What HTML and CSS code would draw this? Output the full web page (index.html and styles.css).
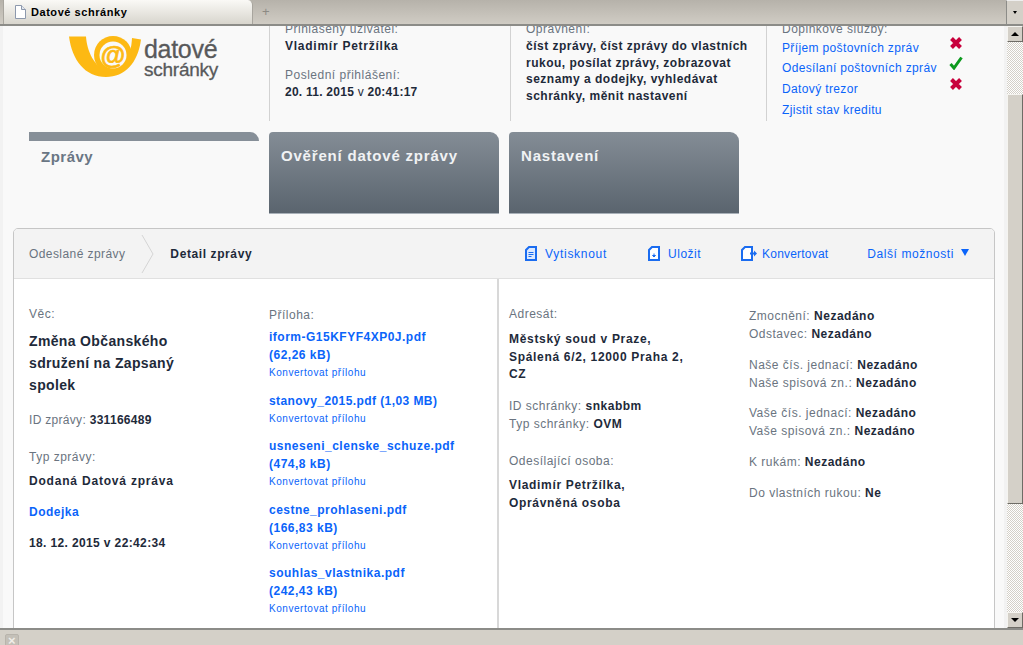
FILE: index.html
```html
<!DOCTYPE html>
<html lang="cs">
<head>
<meta charset="utf-8">
<title>Datové schránky</title>
<link rel="stylesheet" href="styles.css">
</head>
<body>
<div class="tabbar">
  <div class="tab">
    <svg class="tab-icon" width="12" height="14" viewBox="0 0 12 14"><path d="M1.500.5h6l4 4v9h-10z" fill="#fff" stroke="#8d99ad"/><path d="M7.500.5v4h4" fill="#e4e8ee" stroke="#8d99ad"/></svg>
    <span>Datové schránky</span>
  </div>
  <div class="newtab">+</div>
  <div class="tab-menu"><span class="menu-arrow"></span></div>
</div>
<div class="browser">
  <div class="viewport">
    <div class="page">
      <header class="head">
        <div class="logo">
          <svg class="logo-mark" width="74" height="42" viewBox="0 0 74 42">
            <path d="M0 .5H17C18 15 25 31 40 36.500C54 38 62 22 63 2L72 3.500C69 27 56 41 37 41C16 41 3 24 0 .5Z" fill="#fdb913"/>
            <circle cx="44" cy="19" r="19" fill="#fdb913"/>
            <circle cx="44" cy="19" r="13.500" fill="#f9f9f9"/>
            <text class="logo-at" x="44" y="27.500" text-anchor="middle">@</text>
          </svg>
          <div class="logo-text"><span class="logo-a">datové</span><span class="logo-b">schránky</span></div>
        </div>
        <div class="hcol user">
          <div class="label">Přihlášený uživatel:</div>
          <div class="val name">Vladimír Petržílka</div>
          <div class="label gap">Poslední přihlášení:</div>
          <div class="val when">20. 11. 2015 <span class="reg">v</span> 20:41:17</div>
        </div>
        <div class="hcol perm">
          <div class="label">Oprávnění:</div>
          <div class="val perms">číst zprávy, číst zprávy do vlastních rukou, posílat zprávy, zobrazovat seznamy a dodejky, vyhledávat schránky, měnit nastavení</div>
        </div>
        <div class="hcol extras">
          <div class="label">Doplňkové služby:</div>
          <div class="svc"><a>Příjem poštovních zpráv</a><svg class="st" width="14" height="14" viewBox="0 0 14 14"><path d="M2.500 2.500L11.500 11.500M11.500 2.500L2.500 11.500" stroke="#c8003c" stroke-width="4"/></svg></div>
          <div class="svc"><a>Odesílaní poštovních zpráv</a><svg class="st" width="14" height="14" viewBox="0 0 14 14"><path d="M1.500 8L5 12L12.500 1.500" fill="none" stroke="#0c9a1e" stroke-width="3"/></svg></div>
          <div class="svc"><a>Datový trezor</a><svg class="st" width="14" height="14" viewBox="0 0 14 14"><path d="M2.500 2.500L11.500 11.500M11.500 2.500L2.500 11.500" stroke="#c8003c" stroke-width="4"/></svg></div>
          <div class="credit"><a>Zjistit stav kreditu</a></div>
        </div>
      </header>
      <nav class="tabs">
        <div class="mtab active">Zprávy</div>
        <div class="mtab">Ověření datové zprávy</div>
        <div class="mtab">Nastavení</div>
      </nav>
      <section class="panel">
        <div class="toolbar">
          <span class="crumb">Odeslané zprávy</span>
          <svg class="chev" width="14" height="40" viewBox="0 0 14 40"><path d="M1 1L12 20L1 39" fill="none" stroke="#d4d4d4"/></svg>
          <b class="current">Detail zprávy</b>
          <div class="actions">
            <a class="act a1"><svg width="12" height="15" viewBox="0 0 12 15"><path d="M4 1h7v13h-10v-10z" fill="#dce9ff" stroke="#1a6cf0" stroke-width="2"/><path d="M3.500 6.500h5M3.500 8.500h5M3.500 10.500h3" stroke="#1a6cf0"/></svg>Vytisknout</a>
            <a class="act a2"><svg width="12" height="15" viewBox="0 0 12 15"><path d="M4 1h7v13h-10v-10z" fill="#fff" stroke="#1a6cf0" stroke-width="2"/><path d="M6 7.500v2M4.500 9.500h3L6 11z" stroke="#1a6cf0" fill="#1a6cf0"/></svg>Uložit</a>
            <a class="act a3"><svg width="16" height="15" viewBox="0 0 16 15"><path d="M4 1h7v13h-10v-10z" fill="#fff" stroke="#1a6cf0" stroke-width="2"/><path d="M9 7.500h5" stroke="#1a6cf0" stroke-width="2"/><path d="M13 4.500l3 3-3 3z" fill="#1a6cf0"/></svg>Konvertovat</a>
            <a class="act a4">Další možnosti<span class="tri"></span></a>
          </div>
        </div>
        <div class="content">
          <div class="side left">
            <div class="col col-a">
              <div class="label">Věc:</div>
              <div class="subject">Změna Občanského sdružení na Zapsaný spolek</div>
              <div class="line id"><span class="label">ID zprávy:</span> <b>331166489</b></div>
              <div class="label typ">Typ zprávy:</div>
              <div class="val dod">Dodaná Datová zpráva</div>
              <div class="bl dj"><a>Dodejka</a></div>
              <div class="val dt">18. 12. 2015 v 22:42:34</div>
            </div>
            <div class="col col-b">
              <div class="label pri">Příloha:</div>
              <div class="att"><a class="file">iform-G15KFYF4XP0J.pdf<br>(62,26 kB)</a><a class="conv">Konvertovat přílohu</a></div>
              <div class="att"><a class="file tight">stanovy_2015.pdf (1,03 MB)</a><a class="conv">Konvertovat přílohu</a></div>
              <div class="att"><a class="file">usneseni_clenske_schuze.pdf<br>(474,8 kB)</a><a class="conv">Konvertovat přílohu</a></div>
              <div class="att"><a class="file">cestne_prohlaseni.pdf<br>(166,83 kB)</a><a class="conv">Konvertovat přílohu</a></div>
              <div class="att"><a class="file">souhlas_vlastnika.pdf<br>(242,43 kB)</a><a class="conv">Konvertovat přílohu</a></div>
            </div>
          </div>
          <div class="side right">
            <div class="col col-c">
              <div class="label">Adresát:</div>
              <div class="val addr">Městský soud v Praze,<br>Spálená 6/2, 12000 Praha 2,<br>CZ</div>
              <div class="rows r1"><div><span class="label">ID schránky:</span> <b>snkabbm</b></div><div><span class="label">Typ schránky:</span> <b>OVM</b></div></div>
              <div class="label os">Odesílající osoba:</div>
              <div class="val osv">Vladimír Petržílka,<br>Oprávněná osoba</div>
            </div>
            <div class="col col-d">
              <div class="rows"><div><span class="label">Zmocnění:</span> <b>Nezadáno</b></div><div><span class="label">Odstavec:</span> <b>Nezadáno</b></div></div>
              <div class="rows g13"><div><span class="label">Naše čís. jednací:</span> <b>Nezadáno</b></div><div><span class="label">Naše spisová zn.:</span> <b>Nezadáno</b></div></div>
              <div class="rows g12"><div><span class="label">Vaše čís. jednací:</span> <b>Nezadáno</b></div><div><span class="label">Vaše spisová zn.:</span> <b>Nezadáno</b></div></div>
              <div class="rows g13"><div><span class="label">K rukám:</span> <b>Nezadáno</b></div></div>
              <div class="rows g13"><div><span class="label">Do vlastních rukou:</span> <b>Ne</b></div></div>
            </div>
          </div>
        </div>
      </section>
    </div>
  </div>
  <div class="scrollbar">
    <div class="sb-btn"><span class="up"></span></div>
    <div class="sb-track"><div class="sb-gap"></div><div class="sb-thumb"></div></div>
    <div class="sb-btn"><span class="down"></span></div>
  </div>
</div>
<div class="statusbar"><div class="closebtn">×</div></div>
</body>
</html>
```
FILE: styles.css
```css
* { box-sizing: border-box; }
html, body { margin: 0; height: 100%; overflow: hidden; }
body {
  display: flex; flex-direction: column; width: 1023px; height: 645px;
  font: 12px/18px "Liberation Sans", Arial, sans-serif; letter-spacing: .5px;
  color: #1e2a3a; background: #d4d0c8;
}
a { color: #0a64fa; text-decoration: none; }
b { font-weight: 700; }

.tabbar {
  height: 26px; flex: none; display: flex; position: relative;
  background: linear-gradient(#b6b2aa, #d0ccc4); border-bottom: 2px solid #8c8c88;
}
.tab {
  width: 250px; height: 24px; margin-left: 3px; padding-left: 10px; display: flex; align-items: center; gap: 5px;
  background: linear-gradient(#faf9f6, #d8d5cd); border: 1px solid #a8a59e; border-top: 0; border-bottom: 0;
  border-top-right-radius: 5px; color: #000; font-weight: 700; font-size: 11px; letter-spacing: .55px;
}
.newtab { width: 26px; text-align: center; color: #8c8a84; font-size: 13px; line-height: 24px; }
.tab-menu { margin-left: auto; width: 17px; height: 24px; border-left: 1px solid #8c8c88; border-top: 1px solid #eee; background: #d4d0c8; display: flex; align-items: center; justify-content: center; }
.menu-arrow { border: 2px solid transparent; border-top: 3px solid #000; border-bottom: 0; }

.browser { flex: 1; min-height: 0; display: flex; }
.viewport { flex: 1; min-width: 0; overflow: hidden; background: #f9f9f9; border-left: 3px solid #f2f2f2; border-right: 3px solid #f2f2f2; }
.page { margin-top: -5px; padding-left: 10px; }

.label { color: #6a7480; font-weight: 400; }
.val { font-weight: 700; }
.reg { font-weight: 400; }

.head { display: flex; height: 100px; }
.logo { width: 256px; flex: none; padding: 15px 0 0 56px; display: flex; }
.logo-mark { flex: none; }
.logo-at { font: 700 25px "Liberation Sans", sans-serif; fill: #fdb913; stroke: #fdb913; stroke-width: .7px; letter-spacing: 0; }
.logo-text { display: flex; flex-direction: column; margin-left: 1px; padding-top: 1.500px; color: #58595b; letter-spacing: -.3px; -webkit-text-stroke: .3px #58595b; }
.logo-a { font-size: 25px; line-height: 23px; }
.logo-b { font-size: 19px; line-height: 17px; letter-spacing: -.25px; }
.hcol { flex: none; border-left: 1px solid #d2d2d2; padding-left: 15px; line-height: 17px; }
.user { width: 241px; }
.perm { width: 256px; }
.extras { width: 240px; letter-spacing: .36px; }
.name { letter-spacing: .75px; }
.when { letter-spacing: .25px; }
.gap { margin-top: 12px; }
.perms { line-height: 16.700px; width: 228px; }
.extras .label { letter-spacing: .5px; }
.svc { display: flex; width: 181px; height: 20.500px; align-items: center; justify-content: space-between; }
.svc a { white-space: nowrap; }
.st { margin: -11px 0 0; }
.credit { margin-top: 2px; }

.tabs { display: flex; gap: 10px; margin: 11px 0 14px 16px; }
.mtab {
  width: 230px; height: 82px; padding: 14px 12px 0; border-radius: 4px 9px 0 0;
  font-size: 15px; font-weight: 700; line-height: 20px; color: #f0f2f4; letter-spacing: .8px;
  background: linear-gradient(#848d96, #5a646e); border-bottom: 1px solid #a8b0b8;
}
.mtab.active { color: #6a7684; background: #f9f9f9; border-top: 9px solid #868f98; border-bottom: 0; padding-top: 6px; border-radius: 0 9px 0 0; letter-spacing: .5px; }

.panel { width: 982px; height: 500px; border: 1px solid #c6c6c6; border-radius: 5px 5px 0 0; background: #fff; overflow: hidden; }
.toolbar { height: 50px; background: #f3f3f3; border-bottom: 1px solid #e0e0e0; display: flex; align-items: center; padding: 0 0 0 15px; }
.crumb { color: #6a7480; letter-spacing: .42px; }
.chev { margin: 0 15px 0 16px; }
.current { color: #1e2a3a; letter-spacing: .6px; }
.actions { margin-left: auto; display: flex; align-items: center; }
.act { display: flex; align-items: center; gap: 8px; }
.a1 { margin-right: 41px; letter-spacing: .72px; }
.a2 { margin-right: 40px; }
.a3 { margin-right: 39px; gap: 5px; letter-spacing: .2px; }
.a4 { margin-right: 25px; gap: 0; letter-spacing: .57px; }
.tri { margin-left: 7px; border: 4.500px solid transparent; border-top: 7px solid #0a64fa; border-bottom: 0; margin-top: -2px; }

.content { display: flex; height: 450px; }
.side { display: flex; flex: none; padding-top: 26px; }
.left { width: 485px; padding-left: 15px; border-right: 2px solid #d8d8d8; }
.col-a { width: 240px; }
.col-b { width: 225px; }
.right { width: 495px; padding-left: 10px; }
.col-c { width: 240px; }
.col-d { padding-top: 2px; }

.subject { font-size: 14px; font-weight: 700; line-height: 22px; width: 170px; margin-top: 7px; letter-spacing: .35px; }
.id { margin-top: 15px; letter-spacing: .3px; }
.typ { margin-top: 19px; }
.dod { margin-top: 6px; letter-spacing: .8px; }
.dj { margin-top: 13px; font-weight: 700; }
.dt { margin-top: 13px; letter-spacing: .37px; }
.pri { margin-top: 1px; margin-bottom: 4px; }
.att { margin-bottom: 11.500px; }
.file { display: block; font-weight: 700; line-height: 18px; }
.tight { letter-spacing: .42px; }
.conv { display: block; font-size: 10px; line-height: 14px; letter-spacing: .55px; margin-top: 2px; }
.addr { margin-top: 8px; line-height: 17.500px; }
.addr, .osv { letter-spacing: .68px; }
.r1 { margin-top: 13px; }
.os { margin-top: 19px; }
.osv { margin-top: 6px; }
.g13 { margin-top: 13px; }
.g12 { margin-top: 12px; }

.scrollbar { width: 16px; flex: none; display: flex; flex-direction: column; }
.sb-btn { height: 16px; flex: none; background: #d4d0c8; border: 1px solid; border-color: #f5f4f0 #6e6c66 #6e6c66 #f5f4f0; display: flex; align-items: center; justify-content: center; }
.up { border: 4px solid transparent; border-bottom: 4px solid #000; border-top: 0; }
.down { border: 4px solid transparent; border-top: 4px solid #000; border-bottom: 0; }
.sb-track { flex: 1; display: flex; flex-direction: column; background: repeating-conic-gradient(#d4d0c8 0 25%, #fff 0 50%) 0 0 / 2px 2px; }
.sb-gap { height: 52px; }
.sb-thumb { height: 410px; background: #d4d0c8; border: 1px solid; border-color: #f5f4f0 #6e6c66 #6e6c66 #f5f4f0; }

.statusbar { height: 17px; flex: none; background: #d4d0c8; border-top: 2px solid #8c8c88; padding: 4px 0 0 5px; }
.closebtn { width: 14px; height: 13px; border: 1px solid #b8b4ac; border-radius: 2px; color: #f0eee8; font: 700 13px/11px "Liberation Sans", sans-serif; text-align: center; background: #c4c0b8; }
```
